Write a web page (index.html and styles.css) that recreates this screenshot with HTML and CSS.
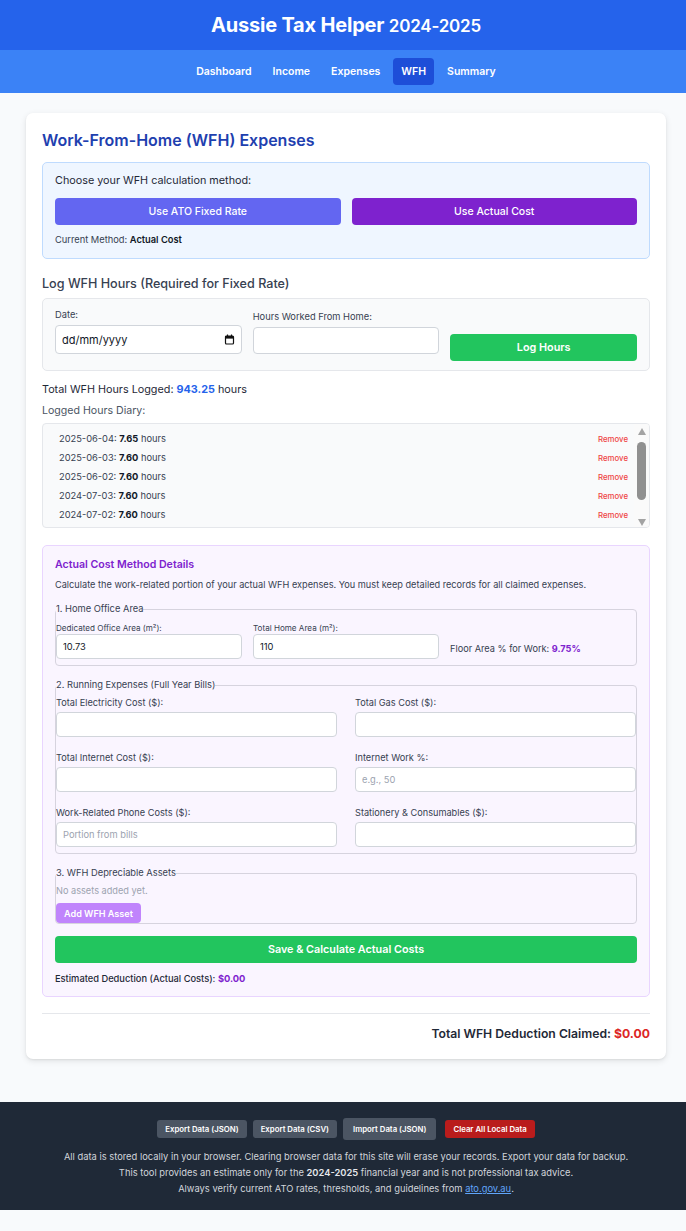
FILE: index.html
```html
<!DOCTYPE html>
<html lang="en">
<head>
<meta charset="utf-8">
<title>Aussie Tax Helper 2024-2025</title>
<link rel="stylesheet" href="styles.css">
</head>
<body>
<header class="site-header">
  <h1 class="brand">Aussie Tax Helper <span class="brand-year">2024-2025</span></h1>
</header>
<nav class="main-nav">
  <a class="nav-link" href="#">Dashboard</a>
  <a class="nav-link" href="#">Income</a>
  <a class="nav-link" href="#">Expenses</a>
  <a class="nav-link active" href="#">WFH</a>
  <a class="nav-link" href="#">Summary</a>
</nav>

<main class="page">
  <section class="card">
    <h2 class="card-title">Work-From-Home (WFH) Expenses</h2>

    <div class="method-box">
      <p class="method-q">Choose your WFH calculation method:</p>
      <div class="method-btns">
        <button class="btn btn-indigo">Use ATO Fixed Rate</button>
        <button class="btn btn-purple">Use Actual Cost</button>
      </div>
      <p class="method-current">Current Method: <strong>Actual Cost</strong></p>
    </div>

    <h3 class="sub-title">Log WFH Hours (Required for Fixed Rate)</h3>
    <div class="log-box">
      <div class="log-field">
        <label class="lbl">Date:</label>
        <div class="fake-date"><span>dd/mm/yyyy</span>
          <svg class="cal" width="11" height="11" viewBox="0 0 11 11"><rect x="1.5" y="2" width="8" height="8" rx="1" fill="none" stroke="#111" stroke-width="1.2"/><rect x="1.5" y="2" width="8" height="2.6" fill="#111"/><line x1="3.5" y1="0.5" x2="3.5" y2="2.5" stroke="#111" stroke-width="1.2"/><line x1="7.5" y1="0.5" x2="7.5" y2="2.5" stroke="#111" stroke-width="1.2"/></svg>
        </div>
      </div>
      <div class="log-field">
        <label class="lbl">Hours Worked From Home:</label>
        <input class="inp" type="text">
      </div>
      <div class="log-field">
        <button class="btn btn-green">Log Hours</button>
      </div>
    </div>

    <p class="total-hours">Total WFH Hours Logged: <span class="blue-strong">943.25</span> hours</p>
    <p class="diary-label">Logged Hours Diary:</p>
    <div class="diary">
      <div class="diary-list">
        <div class="entry"><span>2025-06-04: <b>7.65</b> hours</span><a class="remove" href="#">Remove</a></div>
        <div class="entry"><span>2025-06-03: <b>7.60</b> hours</span><a class="remove" href="#">Remove</a></div>
        <div class="entry"><span>2025-06-02: <b>7.60</b> hours</span><a class="remove" href="#">Remove</a></div>
        <div class="entry"><span>2024-07-03: <b>7.60</b> hours</span><a class="remove" href="#">Remove</a></div>
        <div class="entry"><span>2024-07-02: <b>7.60</b> hours</span><a class="remove" href="#">Remove</a></div>
      </div>
      <div class="fake-scroll" aria-hidden="true">
        <span class="arrow-up"></span>
        <span class="track"><span class="thumb"></span></span>
        <span class="arrow-down"></span>
      </div>
    </div>

    <div class="actual-box">
      <h4 class="actual-title">Actual Cost Method Details</h4>
      <p class="actual-desc">Calculate the work-related portion of your actual WFH expenses. You must keep detailed records for all claimed expenses.</p>

      <fieldset class="fs">
        <legend class="lg">1. Home Office Area</legend>
        <div class="area-grid">
          <div class="field">
            <label class="lbl-xs">Dedicated Office Area (m²):</label>
            <input class="inp inp-sm" type="text" value="10.73">
          </div>
          <div class="field">
            <label class="lbl-xs">Total Home Area (m²):</label>
            <input class="inp inp-sm" type="text" value="110">
          </div>
          <p class="floor-pct">Floor Area % for Work: <span class="purple-strong">9.75%</span></p>
        </div>
      </fieldset>

      <fieldset class="fs">
        <legend class="lg">2. Running Expenses (Full Year Bills)</legend>
        <div class="run-grid">
          <div class="field"><label class="lbl-s">Total Electricity Cost ($):</label><input class="inp inp-sm" type="text"></div>
          <div class="field"><label class="lbl-s">Total Gas Cost ($):</label><input class="inp inp-sm" type="text"></div>
          <div class="field"><label class="lbl-s">Total Internet Cost ($):</label><input class="inp inp-sm" type="text"></div>
          <div class="field"><label class="lbl-s">Internet Work %:</label><input class="inp inp-sm" type="text" placeholder="e.g., 50"></div>
          <div class="field"><label class="lbl-s">Work-Related Phone Costs ($):</label><input class="inp inp-sm" type="text" placeholder="Portion from bills"></div>
          <div class="field"><label class="lbl-s">Stationery &amp; Consumables ($):</label><input class="inp inp-sm" type="text"></div>
        </div>
      </fieldset>

      <fieldset class="fs fs-assets">
        <legend class="lg">3. WFH Depreciable Assets</legend>
        <p class="no-assets">No assets added yet.</p>
        <button class="btn btn-lilac">Add WFH Asset</button>
      </fieldset>

      <button class="btn btn-green btn-save">Save &amp; Calculate Actual Costs</button>
      <p class="est">Estimated Deduction (Actual Costs): <span class="purple-strong">$0.00</span></p>
    </div>

    <div class="total-row">
      <p class="total-claimed">Total WFH Deduction Claimed: <span class="red-strong">$0.00</span></p>
    </div>
  </section>
</main>

<footer class="site-footer">
  <div class="foot-btns">
    <button class="fbtn">Export Data (JSON)</button>
    <button class="fbtn">Export Data (CSV)</button>
    <button class="fbtn fbtn-tall">Import Data (JSON)</button>
    <button class="fbtn fbtn-red">Clear All Local Data</button>
  </div>
  <p class="foot-text">All data is stored locally in your browser. Clearing browser data for this site will erase your records. Export your data for backup.</p>
  <p class="foot-text">This tool provides an estimate only for the <strong>2024-2025</strong> financial year and is not professional tax advice.</p>
  <p class="foot-text">Always verify current ATO rates, thresholds, and guidelines from <a class="foot-link" href="#">ato.gov.au</a>.</p>
</footer>
</body>
</html>
```

FILE: styles.css
```css
* { box-sizing: border-box; }
html, body { margin: 0; padding: 0; }
body {
  font-family: Inter, "Noto Sans", "Liberation Sans", sans-serif;
  background: #f8fafc;
  color: #1f2937;
}
p, h1, h2, h3, h4 { margin: 0; }
button, input { font-family: inherit; }

.site-header {
  background: #2563eb;
  height: 50px;
  padding-left: 6px;
  display: flex;
  align-items: center;
  justify-content: center;
}
.brand {
  color: #fff;
  font-size: 20px;
  font-weight: 700;
  letter-spacing: -0.2px;
}
.brand-year { font-size: 17px; font-weight: 600; }

.main-nav {
  background: #3b82f6;
  height: 43px;
  padding-left: 6px;
  display: flex;
  align-items: center;
  justify-content: center;
  gap: 5px;
}
.nav-link {
  color: #fff;
  text-decoration: none;
  font-size: 10.5px;
  font-weight: 600;
  padding: 7px 8px;
  border-radius: 4px;
  line-height: 13px;
}
.nav-link.active { background: #1d4ed8; }

.page { padding: 20px 20px 43px 26px; }
.card {
  width: 640px;
  margin: 0 auto;
  background: #fff;
  border-radius: 7px;
  box-shadow: 0 2px 6px rgba(0,0,0,0.1), 0 1px 2px rgba(0,0,0,0.06);
  padding: 17px 16px 17px;
}
.card-title {
  color: #1e40af;
  font-size: 16px;
  font-weight: 600;
  line-height: 20px;
  margin-bottom: 12px;
}

.method-box {
  background: #eff6ff;
  border: 1px solid #bfdbfe;
  border-radius: 5px;
  padding: 11px 12px 12px;
}
.method-q { font-size: 10.8px; color: #1f2937; line-height: 14px; margin-bottom: 10px; }
.method-btns { display: grid; grid-template-columns: 1fr 1fr; gap: 11px; }
.btn {
  border: none;
  color: #fff;
  font-size: 10.5px;
  font-weight: 500;
  border-radius: 4px;
  height: 27px;
  cursor: pointer;
}
.btn-indigo { background: #6366f1; }
.btn-purple { background: #7e22ce; }
.method-current { font-size: 9.3px; color: #374151; margin-top: 9px; line-height: 12px; }
.method-current strong { font-weight: 600; color: #111827; }

.sub-title {
  font-size: 12.6px;
  font-weight: 500;
  color: #374151;
  line-height: 16px;
  margin: 17px 0 6px;
}
.log-box {
  background: #f9fafb;
  border: 1px solid #e5e7eb;
  border-radius: 5px;
  padding: 10px 12px 9px;
  display: grid;
  grid-template-columns: 1fr 1fr 1fr;
  gap: 11px;
  align-items: end;
}
.log-field { display: flex; flex-direction: column; }
.lbl { font-size: 9.3px; color: #374151; line-height: 12px; margin-bottom: 4px; }
.fake-date {
  height: 29px;
  background: #fff;
  border: 1px solid #d1d5db;
  border-radius: 4px;
  padding: 0 6px 0 6px;
  display: flex;
  align-items: center;
  justify-content: space-between;
  font-size: 11px;
  color: #111827;
  margin-bottom: 7px;
}
.inp {
  height: 27px;
  background: #fff;
  border: 1px solid #d1d5db;
  border-radius: 4px;
  padding: 0 6px;
  font-size: 9.5px;
  color: #111827;
  outline: none;
}
.log-field .inp { margin-bottom: 7px; }
.inp::placeholder { color: #9ca3af; }
.btn-green { background: #22c55e; font-weight: 600; }
.log-field .btn-green { height: 27px; font-size: 10.8px; }

.total-hours { font-size: 10.8px; color: #1f2937; margin-top: 12px; line-height: 14px; }
.blue-strong { color: #2563eb; font-weight: 700; }
.diary-label { font-size: 10.6px; color: #4b5563; margin-top: 7px; line-height: 14px; }
.diary {
  margin-top: 5px;
  height: 105px;
  background: #f9fafb;
  border: 1px solid #e5e7eb;
  border-radius: 4px;
  display: flex;
  overflow: hidden;
}
.diary-list {
  flex: 1;
  overflow: hidden;
  padding: 5px 6px 0 16px;
}
.entry {
  display: flex;
  justify-content: space-between;
  align-items: center;
  font-size: 9.3px;
  color: #374151;
  line-height: 12px;
  height: 19px;
}
.entry b { color: #111827; font-weight: 700; }
.remove { color: #ef4444; font-size: 7.8px; text-decoration: none; font-weight: 500; }

.fake-scroll {
  width: 15px;
  background: #fafafa;
  display: flex;
  flex-direction: column;
  align-items: center;
}
.arrow-up, .arrow-down {
  width: 0; height: 0;
  border-left: 4.5px solid transparent;
  border-right: 4.5px solid transparent;
}
.arrow-up { border-bottom: 7px solid #a3a3a3; margin-top: 4px; }
.arrow-down { border-top: 7px solid #a3a3a3; margin-bottom: 4px; }
.track { flex: 1; display: flex; justify-content: center; padding: 7px 0 19px; }
.thumb { width: 9px; background: #909090; border-radius: 5px; display: block; height: 58px; }

.actual-box {
  margin-top: 17px;
  background: #faf5ff;
  border: 1px solid #e9d5ff;
  border-radius: 5px;
  padding: 12px 12px 11px;
}
.actual-title { font-size: 10.6px; font-weight: 600; color: #7e22ce; line-height: 14px; }
.actual-desc { font-size: 9.2px; color: #374151; line-height: 12px; margin-top: 7px; margin-bottom: 12px; }
.fs {
  margin: 0 0 13px;
  padding: 0 0 6px;
  border: 1px solid #d6d3de;
  border-radius: 4px;
  min-width: 0;
}
.lg { padding: 0; font-size: 9.3px; color: #374151; line-height: 12px; }
.area-grid {
  display: grid;
  grid-template-columns: 1fr 1fr 1fr;
  gap: 11px;
  align-items: end;
  padding-top: 8px;
}
.field { display: flex; flex-direction: column; }
.lbl-xs { font-size: 8.1px; color: #374151; line-height: 10px; margin-bottom: 1px; }
.lbl-s { font-size: 9.2px; color: #374151; line-height: 12px; margin-bottom: 3px; }
.inp-sm { height: 25px; font-size: 9.3px; }
.floor-pct { font-size: 9.2px; color: #374151; line-height: 12px; margin-bottom: 4px; }
.purple-strong { color: #7e22ce; font-weight: 700; }
.run-grid {
  display: grid;
  grid-template-columns: 1fr 1fr;
  column-gap: 18px;
  row-gap: 15px;
  padding-top: 6px;
}
.fs-assets { padding-bottom: 0; margin-bottom: 12px; }
.no-assets { font-size: 9.2px; color: #9ca3af; line-height: 12px; margin: 6px 0 6px; }
.btn-lilac {
  background: #c084fc;
  height: 20px;
  font-size: 9.1px;
  font-weight: 600;
  padding: 0 8px;
  border-radius: 4px;
  display: block;
}
.btn-save { width: 100%; height: 27px; font-size: 10.8px; display: block; }
.est { font-size: 9.3px; color: #1f2937; margin-top: 10px; line-height: 12px; font-weight: 500; }

.total-row {
  margin-top: 16px;
  border-top: 1px solid #e5e7eb;
  padding-top: 12px;
  display: flex;
  justify-content: flex-end;
}
.total-claimed { font-size: 12.2px; font-weight: 600; color: #1f2937; line-height: 16px; }
.red-strong { color: #dc2626; font-weight: 700; }

.site-footer {
  background: #1f2937;
  padding: 16px 20px 13px 26px;
  text-align: center;
}
.foot-btns {
  display: flex;
  justify-content: center;
  align-items: center;
  gap: 6px;
  margin-bottom: 9px;
}
.fbtn {
  border: none;
  background: #4b5563;
  color: #fff;
  font-size: 7.8px;
  font-weight: 600;
  height: 18px;
  padding: 0 8px;
  border-radius: 3px;
}
.fbtn-tall { height: 22px; padding: 0 10px; margin-right: 3px; }
.fbtn-red { background: #b91c1c; }
.foot-text { font-size: 9.35px; color: #d1d5db; line-height: 16px; }
.foot-text strong { font-weight: 600; color: #e5e7eb; }
.foot-link { color: #60a5fa; text-decoration: underline; }
```
